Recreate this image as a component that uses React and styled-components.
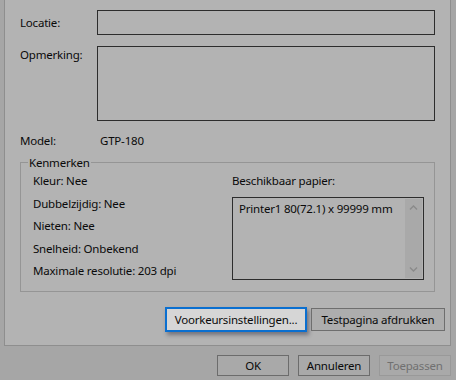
import React from 'react';
import styled, { createGlobalStyle } from 'styled-components';

const GlobalStyle = createGlobalStyle`
    html, body {
        margin: 0;
        padding: 0;
        background-color: #a6a6a6;
    }
    body {
        font-family: "Noto Sans", "Open Sans", sans-serif;
        font-size: 11.5px;
        letter-spacing: -0.2px;
        color: #0a0a0a;
    }
    button {
        letter-spacing: -0.2px;
    }
`

const features = [
    'Kleur: Nee',
    'Dubbelzijdig: Nee',
    'Nieten: Nee',
    'Snelheid: Onbekend',
    'Maximale resolutie: 203 dpi',
];

const Chevron = ({ down }) => (
    <svg width="9" height="6" viewBox="0 0 9 6">
        <path
            d={down ? 'M1 1.5 L4.5 5 L8 1.5' : 'M1 4.5 L4.5 1 L8 4.5'}
            fill="none"
            stroke="#8a8a8a"
            strokeWidth="1.4"
        />
    </svg>
);

const App = () => {
    return (
        <React.Fragment>
            <GlobalStyle />
            <Screen>
                <Panel>
                    <FormGrid>
                        <Label top={5}>Locatie:</Label>
                        <Field height={25} />
                        <Label top={1}>Opmerking:</Label>
                        <Field height={75} />
                    </FormGrid>
                    <ModelRow>
                        <Label top={4}>Model:</Label>
                        <Label top={4}>GTP-180</Label>
                    </ModelRow>
                    <Group>
                        <Legend>Kenmerken</Legend>
                        <GroupBody>
                            <FeatureList>
                                {features.map((f) => (
                                    <Feature key={f}>{f}</Feature>
                                ))}
                            </FeatureList>
                            <PaperColumn>
                                <Feature>Beschikbaar papier:</Feature>
                                <PaperList>
                                    <PaperItem>Printer1 80(72.1) x 99999 mm</PaperItem>
                                    <ScrollTrack>
                                        <Chevron />
                                        <Chevron down />
                                    </ScrollTrack>
                                </PaperList>
                            </PaperColumn>
                        </GroupBody>
                    </Group>
                    <ActionRow>
                        <Button primary width={142}>Voorkeursinstellingen...</Button>
                        <Button width={134}>Testpagina afdrukken</Button>
                    </ActionRow>
                </Panel>
                <Footer>
                    <DialogButton>OK</DialogButton>
                    <DialogButton>Annuleren</DialogButton>
                    <DialogButton disabled>Toepassen</DialogButton>
                </Footer>
            </Screen>
        </React.Fragment>
    )
}

export default App;

const Screen = styled.div`
    width: 456px;
    height: 380px;
    overflow: hidden;
    box-sizing: border-box;
`

const Panel = styled.div`
    margin: 0 5px 0 4px;
    height: 346px;
    box-sizing: border-box;
    background-color: #b3b3b3;
    border: solid 1px #8e8e8e;
    border-top: none;
    padding: 10px 15px 0 15px;
    display: flex;
    flex-direction: column;
`

const FormGrid = styled.div`
    display: grid;
    grid-template-columns: 77px 1fr;
    row-gap: 11px;
`

const Label = styled.div`
    padding-top: ${(props) => props.top}px;
    line-height: 16px;
    white-space: nowrap;
`

const Field = styled.div`
    height: ${(props) => props.height}px;
    box-sizing: border-box;
    border: solid 1px #2d2d2d;
`

const ModelRow = styled.div`
    display: grid;
    grid-template-columns: 80px 1fr;
    margin-top: 8px;
`

const Group = styled.fieldset`
    margin: 6px 0 0 0;
    padding: 0 10px 8px 12px;
    border: solid 1px #959595;
    min-width: 0;
`

const Legend = styled.legend`
    padding: 0 1px;
    margin-left: -5px;
    line-height: 15px;
`

const GroupBody = styled.div`
    display: grid;
    grid-template-columns: 199px 1fr;
`

const FeatureList = styled.div`
    display: flex;
    flex-direction: column;
`

const Feature = styled.div`
    line-height: 22.5px;
    white-space: nowrap;
`

const PaperColumn = styled.div`
    display: flex;
    flex-direction: column;
`

const PaperList = styled.div`
    margin-top: 4px;
    height: 83px;
    box-sizing: border-box;
    border: solid 1px #2d2d2d;
    display: flex;
    justify-content: space-between;
    padding: 1px 1px 1px 0;
`

const PaperItem = styled.div`
    padding: 2px 6px;
    line-height: 16px;
    white-space: nowrap;
`

const ScrollTrack = styled.div`
    width: 17px;
    background-color: #a9a9a9;
    display: flex;
    flex-direction: column;
    justify-content: space-between;
    align-items: center;
    padding: 6px 0 6px;
    box-sizing: border-box;
`

const ActionRow = styled.div`
    display: flex;
    justify-content: flex-end;
    align-items: center;
    gap: 4px;
    margin: 15px -10px 0 0;
`

const Button = styled.button`
    width: ${(props) => props.width}px;
    height: ${(props) => (props.primary ? 25 : 23)}px;
    box-sizing: border-box;
    font-family: inherit;
    font-size: 11.5px;
    color: #0a0a0a;
    padding: 0;
    background-color: ${(props) => (props.primary ? '#d6d6d6' : '#adadad')};
    border: ${(props) => (props.primary ? 'solid 2px #0a6fd0' : 'solid 1px #6e6e6e')};
    box-shadow: ${(props) => (props.primary ? '2px 3px 4px rgba(40, 40, 60, 0.45)' : 'none')};
`

const Footer = styled.div`
    display: flex;
    justify-content: flex-end;
    gap: 9px;
    padding: 9px 5px 0 0;
`

const DialogButton = styled.button`
    width: 72px;
    height: 21px;
    box-sizing: border-box;
    padding: 0;
    font-family: inherit;
    font-size: 11.5px;
    color: #0a0a0a;
    background-color: #a9a9a9;
    border: solid 1px #6c6c6c;

    &:disabled {
        color: #707070;
        border-color: #999999;
    }
`
